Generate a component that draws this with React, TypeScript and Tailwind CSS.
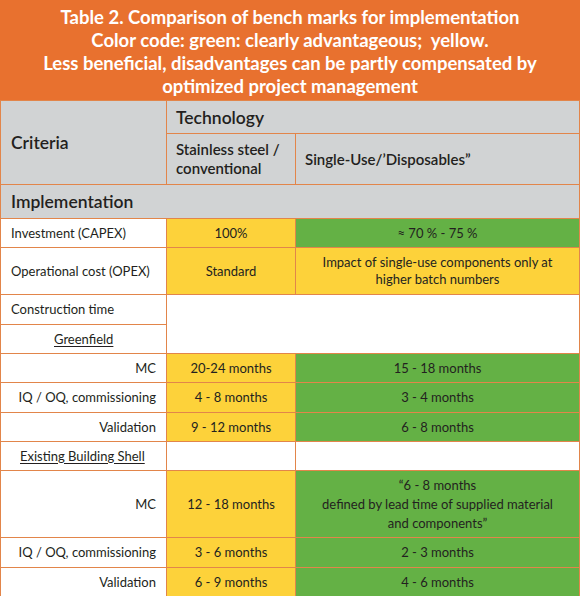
const cell = "border border-[#e2854a] text-[13px] leading-[17px] text-[#231f20]";
const yellow = "bg-[#fdd23a] text-center";
const green = "bg-[#64b145] text-center";

type Row = {
  label: string;
  h: string;
  a: string;
  b: string;
};

const greenfield: Row[] = [
  { label: "MC", h: "h-[29px]", a: "20-24 months", b: "15 - 18 months" },
  { label: "IQ / OQ, commissioning", h: "h-[30px]", a: "4 - 8 months", b: "3 - 4 months" },
  { label: "Validation", h: "h-[29px]", a: "9 - 12 months", b: "6 - 8 months" },
];

const App = () => {
  return (
    <div className="w-[580px] bg-white font-['Lato','Open_Sans',sans-serif]">
      <div className="bg-[#e8712f] pt-[6px] pb-[2px] text-center text-[18.5px] font-bold leading-[23px] text-white">
        <p>Table 2. Comparison of bench marks for implementation</p>
        <p>Color code: green: clearly advantageous;&nbsp; yellow.</p>
        <p>Less beneficial, disadvantages can be partly compensated by</p>
        <p>optimized project management</p>
      </div>
      <table className="w-[579px] table-fixed border-collapse">
        <colgroup>
          <col className="w-[166px]" />
          <col className="w-[129px]" />
          <col className="w-[284px]" />
        </colgroup>
        <tbody>
          <tr className="h-[33px] bg-[#d1d3d4]">
            <td rowSpan={2} className={`${cell} pl-[10px] text-[17.5px] font-semibold`}>
              Criteria
            </td>
            <td colSpan={2} className={`${cell} pl-[9px] text-[17.5px] font-semibold`}>
              Technology
            </td>
          </tr>
          <tr className="h-[51px] bg-[#d1d3d4]">
            <td className={`${cell} pl-[9px] text-[15px] leading-[19px] font-semibold`}>
              Stainless steel /<br />conventional
            </td>
            <td className={`${cell} pl-[9px] text-[15px] font-semibold`}>
              Single-Use/’Disposables”
            </td>
          </tr>
          <tr className="h-[34px] bg-[#d1d3d4]">
            <td colSpan={3} className={`${cell} pl-[10px] text-[17.5px] font-semibold`}>
              Implementation
            </td>
          </tr>
          <tr className="h-[29px]">
            <td className={`${cell} pl-[10px]`}>Investment (CAPEX)</td>
            <td className={`${cell} ${yellow}`}>100%</td>
            <td className={`${cell} ${green}`}>≈ 70 % - 75 %</td>
          </tr>
          <tr className="h-[47px]">
            <td className={`${cell} pl-[10px]`}>Operational cost (OPEX)</td>
            <td className={`${cell} ${yellow}`}>Standard</td>
            <td className={`${cell} ${yellow} px-6`}>
              Impact of single-use components only at higher batch numbers
            </td>
          </tr>
          <tr className="h-[30px]">
            <td className={`${cell} pl-[10px]`}>Construction time</td>
            <td rowSpan={2} colSpan={2} className={cell}></td>
          </tr>
          <tr className="h-[29px]">
            <td className={`${cell} pl-[53px]`}>
              <span className="underline underline-offset-2">Greenfield</span>
            </td>
          </tr>
          {greenfield.map((r) => (
            <tr key={"g" + r.label} className={r.h}>
              <td className={`${cell} pr-[10px] text-right`}>{r.label}</td>
              <td className={`${cell} ${yellow}`}>{r.a}</td>
              <td className={`${cell} ${green}`}>{r.b}</td>
            </tr>
          ))}
          <tr className="h-[29px]">
            <td className={`${cell} pl-[19px]`}>
              <span className="underline underline-offset-2">Existing Building Shell</span>
            </td>
            <td className={cell}></td>
            <td className={cell}></td>
          </tr>
          <tr className="h-[67px]">
            <td className={`${cell} pr-[10px] text-right`}>MC</td>
            <td className={`${cell} ${yellow}`}>12 - 18 months</td>
            <td className={`${cell} ${green} leading-[19px]`}>
              “6 - 8 months
              <br />
              defined by lead time of supplied material
              <br />
              and components”
            </td>
          </tr>
          <tr className="h-[30px]">
            <td className={`${cell} pr-[10px] text-right`}>IQ / OQ, commissioning</td>
            <td className={`${cell} ${yellow}`}>3 - 6 months</td>
            <td className={`${cell} ${green}`}>2 - 3 months</td>
          </tr>
          <tr className="h-[30px]">
            <td className={`${cell} pr-[10px] text-right`}>Validation</td>
            <td className={`${cell} ${yellow}`}>6 - 9 months</td>
            <td className={`${cell} ${green}`}>4 - 6 months</td>
          </tr>
        </tbody>
      </table>
    </div>
  );
};

export default App;
